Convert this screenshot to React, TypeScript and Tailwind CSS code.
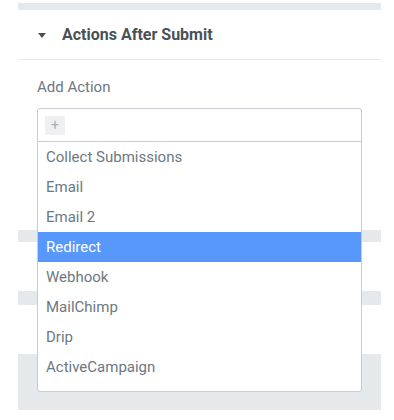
export default function App() {
  const options = [
    "Collect Submissions",
    "Email",
    "Email 2",
    "Redirect",
    "Webhook",
    "MailChimp",
    "Drip",
    "ActiveCampaign",
    "ConvertKit",
  ];

  return (
    <div className="h-[420px] w-[394px] overflow-hidden bg-white font-['Roboto',sans-serif] px-[18px] pt-[3px]">
      {/* previous section edge */}
      <div className="h-[7px] w-[363px] bg-[#e6e9ec]" />

      {/* section header */}
      <div className="flex h-[50px] w-[363px] items-center border-b border-[#e6e9ec] pl-[20px]">
        <svg width="8" height="5" viewBox="0 0 8 5" className="mr-[16px] mt-[1px]">
          <path d="M0 0h8L4 5z" fill="#495157" />
        </svg>
        <span className="text-[16px] font-bold leading-[20px] text-[#495157]">Actions After Submit</span>
      </div>

      {/* control */}
      <div className="relative h-[170px] px-[19px] pt-[18px]">
        <div className="text-[15px] leading-[18px] text-[#6d7882]">Add Action</div>
        <div className="relative mt-[12px] w-[325px]">
          <div className="flex h-[34px] items-center rounded-t-[3px] border border-[#c8ccd0] bg-white px-[7px]">
            <div className="flex h-[19px] w-[20px] items-center justify-center bg-[#eff0f1] text-[14px] text-[#a4afb7]">
              +
            </div>
          </div>
          {/* open dropdown */}
          <div className="absolute left-0 top-[33px] z-10 h-[251px] w-[325px] overflow-hidden rounded-b-[3px] border border-[#c8ccd0] bg-white">
            {options.map((o) => (
              <div
                key={o}
                className={
                  o === "Redirect"
                    ? "flex h-[30px] items-center bg-[#5897fb] px-[8px] text-[15px] text-white"
                    : "flex h-[30px] items-center px-[8px] text-[15px] text-[#6d7882]"
                }
              >
                {o}
              </div>
            ))}
          </div>
        </div>
      </div>

      {/* collapsed sections behind */}
      <div className="h-[12px] w-[363px] bg-[#e6e9ec]" />
      <div className="h-[49px]" />
      <div className="h-[14px] w-[363px] bg-[#e6e9ec]" />
      <div className="h-[49px]" />
      <div className="h-[56px] w-[363px] bg-[#e6e9ec]" />
    </div>
  );
}
